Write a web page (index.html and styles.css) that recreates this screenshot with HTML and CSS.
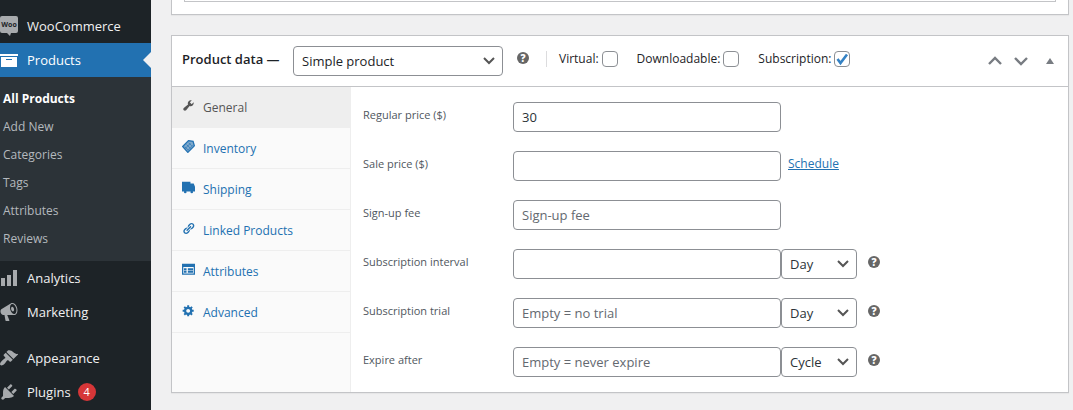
FILE: index.html
```html
<!DOCTYPE html>
<html lang="en">
<head>
<meta charset="utf-8">
<title>Edit product</title>
<link rel="stylesheet" href="styles.css">
</head>
<body>
<div class="layout">
  <nav class="sidebar" aria-label="Main menu">
    <a class="menu-item" href="#"><svg class="menu-icon" viewBox="1 0 18 20" aria-hidden="true"><path d="M2 0h15q2 0 2 2v13q0 2-2 2h-5l-1 3-3-3H3q-2 0-2-2V2q0-2 2-2z"/><text class="woo-text" x="10" y="11" text-anchor="middle">Woo</text></svg>WooCommerce</a>
    <a class="menu-item current" href="#"><svg class="menu-icon" viewBox="1 0 18 20" aria-hidden="true"><path d="M19 4v2H1V4h18zM2 7h16v10H2V7zm11 3V9H7v1h6z"/></svg>Products</a>
    <div class="submenu">
      <a class="submenu-item active" href="#">All Products</a>
      <a class="submenu-item" href="#">Add New</a>
      <a class="submenu-item" href="#">Categories</a>
      <a class="submenu-item" href="#">Tags</a>
      <a class="submenu-item" href="#">Attributes</a>
      <a class="submenu-item" href="#">Reviews</a>
    </div>
    <a class="menu-item" href="#"><svg class="menu-icon" viewBox="1 0 18 20" aria-hidden="true"><path d="M18 18V2h-4v16h4zm-6 0V7H8v11h4zm-6 0v-8H2v8h4z"/></svg>Analytics</a>
    <a class="menu-item" href="#"><svg class="menu-icon" viewBox="1 0 18 20" aria-hidden="true"><path d="M18.15 5.94c.46 1.62.38 3.22-.02 4.48-.42 1.28-1.26 2.18-2.3 2.48-.16.06-.26.06-.4.06-.06.02-.12.02-.18.02-.06.02-.14.02-.22.02h-6.8l2.22 5.5c.02.14-.06.26-.14.34-.08.1-.24.16-.34.16H6.95c-.1 0-.26-.06-.34-.16-.08-.08-.16-.2-.14-.34l-1-5.5H4.25l-.02-.02c-.5.06-1.08-.18-1.54-.62s-.88-1.08-1.06-1.88c-.24-.8-.2-1.56-.02-2.2.18-.62.58-1.08 1.06-1.3l.02-.02 9-5.4c.1-.06.18-.1.24-.16.06-.04.14-.08.24-.12.16-.08.28-.12.5-.18 1.04-.3 2.24.1 3.22.98s1.84 2.24 2.26 3.86zm-2.58 5.98h-.02c.4-.1.74-.34 1.04-.7.58-.7.86-1.76.86-3.04 0-.64-.1-1.3-.28-1.98-.34-1.36-1.02-2.5-1.78-3.24s-1.68-1.1-2.46-.88c-.82.22-1.4.96-1.7 2-.32 1.04-.28 2.36.06 3.72.38 1.36 1 2.5 1.8 3.24.78.74 1.62 1.1 2.48.88zm-2.54-7.08c.22-.04.42-.02.62.04.38.16.76.48 1.02 1s.42 1.2.42 1.78c0 .3-.04.56-.12.8-.18.48-.44.84-.86.94-.34.1-.8-.06-1.14-.4s-.64-.86-.78-1.5c-.18-.62-.12-1.24.02-1.72s.48-.84.82-.94z"/></svg>Marketing</a>
    <a class="menu-item spaced" href="#"><svg class="menu-icon" viewBox="1 0 18 20" aria-hidden="true"><path d="M14.48 11.06L7.41 3.99l1.5-1.5c.5-.56 2.3-.47 3.51.32 1.21.8 1.43 1.28 2.91 2.1 1.18.64 2.45 1.26 4.45.85zm-.71.71L6.7 4.7 4.93 6.47c-.39.39-.39 1.02 0 1.41l1.06 1.06c.39.39.39 1.03 0 1.42-.6.6-1.43 1.11-2.21 1.69-.35.26-.7.53-1.01.84C1.43 14.23.4 16.08 1.4 17.07c.99 1 2.84-.03 4.18-1.36.31-.31.58-.66.85-1.02.57-.78 1.08-1.61 1.69-2.21.39-.39 1.02-.39 1.41 0l1.06 1.06c.39.39 1.02.39 1.41 0z"/></svg>Appearance</a>
    <a class="menu-item" href="#"><svg class="menu-icon" viewBox="1 0 18 20" aria-hidden="true"><path d="M13.11 4.36L9.87 7.6 8 5.73l3.24-3.24c.35-.34 1.05-.2 1.56.32.52.51.66 1.21.31 1.55zm-8 1.77l.91-1.12 9.01 9.01-1.19.84c-.71.71-2.63 1.16-3.82 1.16H6.14L4.9 17.26c-.59.59-1.54.59-2.12 0-.59-.58-.59-1.53 0-2.12l1.24-1.24v-3.88c0-1.13.4-3.19 1.09-3.89zm7.26 3.97l3.24-3.24c.34-.35 1.04-.21 1.55.31.52.51.66 1.21.31 1.55l-3.24 3.25z"/></svg>Plugins<span class="count">4</span></a>
  </nav>

  <main class="main">
    <section class="postbox editor"><div class="editor-frame"></div></section>

    <section class="postbox">
      <header class="box-header">
        <label class="box-title" for="type">Product data —</label>
        <select class="field type-select" id="type"><option>Simple product</option></select>
        <span class="help">?</span>
        <div class="options">
          <label class="option">Virtual:<input class="check" type="checkbox"></label>
          <label class="option">Downloadable:<input class="check" type="checkbox"></label>
          <label class="option">Subscription:<input class="check" type="checkbox" checked></label>
        </div>
        <div class="handles">
          <button class="handle" type="button" aria-label="Move up"><svg width="14" height="10" viewBox="0 0 14 10"><path class="chevron" d="M1 8l6-6 6 6"/></svg></button>
          <button class="handle" type="button" aria-label="Move down"><svg width="14" height="10" viewBox="0 0 14 10"><path class="chevron" d="M1 2l6 6 6-6"/></svg></button>
          <button class="handle toggle" type="button" aria-label="Toggle panel"><svg width="8" height="6" viewBox="0 0 8 6"><path d="M4 0l4 6H0z"/></svg></button>
        </div>
      </header>

      <div class="box-body">
        <nav class="tabs" aria-label="Product data">
          <a class="tab selected" href="#"><svg class="tab-icon" viewBox="0 0 20 20" aria-hidden="true"><path d="M16.68 9.77c-1.34 1.34-3.3 1.67-4.95.99l-5.41 6.52c-.99.99-2.59.99-3.58 0s-.99-2.59 0-3.57l6.52-5.42c-.68-1.65-.35-3.61.99-4.95 1.28-1.28 3.12-1.62 4.72-1.06l-2.89 2.89 2.82 2.82 2.86-2.87c.53 1.58.18 3.39-1.08 4.65z"/></svg>General</a>
          <a class="tab" href="#"><svg class="tab-icon" viewBox="0 0 20 20" aria-hidden="true"><path class="tag-body" d="M10 1l7 1 2 7-10 10-8-9z"/><path class="tag-lines" d="M4 10l6 6M7 7l6 6M10 4l5 5M5 13l8-8M9 16l8-8"/></svg>Inventory</a>
          <a class="tab" href="#"><svg class="tab-icon" viewBox="0 0 20 20" aria-hidden="true"><path d="M0 1h13v3h5l2 5v7H0z"/><circle cx="5" cy="17" r="2"/><circle cx="15" cy="17" r="2"/></svg>Shipping</a>
          <a class="tab" href="#"><svg class="tab-icon" viewBox="0 0 20 20" aria-hidden="true"><path d="M17.74 2.76c1.68 1.69 1.68 4.41 0 6.1l-1.53 1.52c-1.12 1.12-2.7 1.47-4.14 1.09l2.62-2.61.76-.77.76-.76c.84-.84.84-2.2 0-3.04-.84-.85-2.2-.85-3.04 0l-.77.76-3.38 3.38c-.37-1.44-.02-3.02 1.1-4.14l1.52-1.53c1.69-1.68 4.42-1.68 6.1 0zM8.59 13.43l5.34-5.34c.42-.42.42-1.1 0-1.52-.44-.43-1.13-.39-1.53 0l-5.33 5.34c-.42.42-.42 1.1 0 1.52.44.43 1.13.39 1.52 0zm-.76 2.29l4.14-4.15c.38 1.44.03 3.02-1.09 4.14l-1.52 1.53c-1.69 1.68-4.41 1.68-6.1 0-1.68-1.68-1.68-4.42 0-6.1l1.53-1.52c1.12-1.12 2.7-1.47 4.14-1.1l-4.14 4.15c-.85.84-.85 2.2 0 3.05.84.84 2.2.84 3.04 0z"/></svg>Linked Products</a>
          <a class="tab" href="#"><svg class="tab-icon" viewBox="0 0 20 20" aria-hidden="true"><path fill-rule="evenodd" d="M0 1h20v17H0zM2 6v10h16V6zM3 8h4v3H3zM3 12h4v3H3zM9 8h8v3H9zM9 12h8v3H9z"/></svg>Attributes</a>
          <a class="tab" href="#"><svg class="tab-icon" viewBox="0 0 20 20" aria-hidden="true"><path d="M18 12h-2.18c-.17.7-.44 1.35-.81 1.93l1.54 1.54-2.1 2.1-1.54-1.54c-.58.36-1.23.63-1.91.79V19H8v-2.18c-.68-.16-1.33-.43-1.91-.79l-1.54 1.54-2.12-2.12 1.54-1.54c-.36-.58-.63-1.23-.79-1.91H1V9.03h2.17c.16-.7.44-1.35.8-1.94L2.43 5.55l2.1-2.1 1.54 1.54c.58-.37 1.24-.64 1.93-.81V2h3v2.18c.68.16 1.33.43 1.91.79l1.54-1.54 2.12 2.12-1.54 1.54c.36.59.64 1.24.8 1.94H18V12zm-8.5 1.5c1.66 0 3-1.34 3-3s-1.34-3-3-3-3 1.34-3 3 1.34 3 3 3z"/></svg>Advanced</a>
        </nav>

        <form class="fields">
          <div class="row"><label class="row-label" for="regular">Regular price ($)</label><input class="field text" id="regular" type="text" value="30"></div>
          <div class="row"><label class="row-label" for="sale">Sale price ($)</label><input class="field text" id="sale" type="text"><a class="schedule" href="#">Schedule</a></div>
          <div class="row"><label class="row-label" for="fee">Sign-up fee</label><input class="field text" id="fee" type="text" placeholder="Sign-up fee"></div>
          <div class="row"><label class="row-label" for="interval">Subscription interval</label><input class="field text" id="interval" type="text"><select class="field unit" aria-label="Interval unit"><option>Day</option></select><span class="help">?</span></div>
          <div class="row"><label class="row-label" for="trial">Subscription trial</label><input class="field text" id="trial" type="text" placeholder="Empty = no trial"><select class="field unit" aria-label="Trial unit"><option>Day</option></select><span class="help">?</span></div>
          <div class="row"><label class="row-label" for="expire">Expire after</label><input class="field text" id="expire" type="text" placeholder="Empty = never expire"><select class="field unit" aria-label="Expiry unit"><option>Cycle</option></select><span class="help">?</span></div>
        </form>
      </div>
    </section>
  </main>
</div>
</body>
</html>
```
FILE: styles.css
```css
* { box-sizing: border-box; }

body {
  margin: 0;
  background: #f0f0f1;
  color: #1d2327;
  font: 13px/18px "Open Sans", "Noto Sans", sans-serif;
}

.layout { display: flex; min-height: 100vh; }

/* Sidebar */
.sidebar { flex: 0 0 151px; padding-top: 9px; background: #1d2327; }

.menu-item {
  position: relative;
  display: flex;
  align-items: center;
  gap: 9px;
  height: 34px;
  color: #f0f0f1;
  font-size: 13px;
  text-decoration: none;
}
.menu-item.spaced { margin-top: 12px; }
.menu-item.current { background: #2271b1; color: #fff; }
.menu-item.current::after {
  content: "";
  position: absolute;
  right: 0;
  border: 8px solid transparent;
  border-right-color: #f0f0f1;
  border-left-width: 0;
}
.menu-icon { width: 18px; height: 20px; fill: #a7aaad; }
.current .menu-icon { fill: #fff; }
.woo-text { fill: #1d2327; font-size: 7px; font-weight: 700; }
.count {
  width: 18px;
  border-radius: 9px;
  background: #d63638;
  color: #fff;
  font-size: 11px;
  text-align: center;
  margin-left: -2px;
}

.submenu { padding: 8px 0; background: #2c3338; }
.submenu-item {
  display: block;
  padding: 5px 3px;
  color: #b4b9be;
  font-size: 12px;
  text-decoration: none;
}
.submenu-item.active { color: #fff; font-weight: 700; }

/* Main column */
.main { flex: 1; min-width: 0; padding: 0 4px 0 20px; }
.postbox {
  border: 1px solid #c3c4c7;
  background: #fff;
  box-shadow: 0 1px 1px rgba(0, 0, 0, .04);
}
.editor { margin-bottom: 20px; padding: 0 12px 12px; border-top: 0; }
.editor-frame { height: 2px; border: 1px solid #c3c4c7; border-top: 0; }

.box-header {
  display: flex;
  align-items: center;
  min-height: 51px;
  padding: 0 14px 0 10px;
  border-bottom: 1px solid #c3c4c7;
}
.box-title { flex: 0 0 111px; padding-bottom: 4px; font-size: 13px; font-weight: 600; }

.field {
  height: 30px;
  padding: 0 8px;
  border: 1px solid #8c8f94;
  border-radius: 4px;
  background-color: #fff;
  color: #2c3338;
  font: 13px/28px "Open Sans", "Noto Sans", sans-serif;
}
.field::placeholder { color: #646970; opacity: 1; }
select.field {
  appearance: none;
  background-image: url("data:image/svg+xml,%3Csvg xmlns='http://www.w3.org/2000/svg' viewBox='0 0 12 8'%3E%3Cpath d='M1 1l5 5 5-5' fill='none' stroke='%23555' stroke-width='2'/%3E%3C/svg%3E");
  background-repeat: no-repeat;
  background-position: right 7px center;
  background-size: 12px 8px;
}
select.type-select { width: 210px; color: #1d2327; font-weight: 500; }

.help {
  flex: none;
  width: 12px;
  height: 12px;
  margin: 0 0 4px 11px;
  border-radius: 50%;
  background: #666;
  color: #fff;
  font-size: 10px;
  font-weight: 800;
  line-height: 12px;
  text-align: center;
}
.box-header .help { margin: 0 0 7px 14px; }

.options {
  display: flex;
  gap: 19px;
  margin: 0 0 4px 17px;
  padding-left: 12px;
  border-left: 1px solid #dcdcde;
}
.option { display: flex; align-items: center; gap: 3px; height: 16px; font-size: 12px; }
.check {
  appearance: none;
  width: 16px;
  height: 16px;
  margin: 0;
  border: 1px solid #8c8f94;
  border-radius: 4px;
  background: #fff;
}
.check:checked {
  background: #fff url("data:image/svg+xml,%3Csvg xmlns='http://www.w3.org/2000/svg' viewBox='0 0 14 14'%3E%3Cpath d='M2.5 7l3 4 6.5-8.500' fill='none' stroke='%233582c4' stroke-width='2.6'/%3E%3C/svg%3E") center / 14px 14px;
}

.handles { display: flex; align-items: center; gap: 12px; margin-left: auto; }
.handle { display: flex; padding: 0; border: 0; background: none; fill: #787c82; }
.handle.toggle { margin-left: 6px; }
.chevron { fill: none; stroke: #787c82; stroke-width: 2.4; }

/* Product data body */
.box-body { display: flex; }
.tabs { flex: 0 0 179px; border-right: 1px solid #eee; background: #fafafa; }
.tab {
  display: flex;
  align-items: center;
  gap: 8px;
  height: 41px;
  padding: 1px 10px 0;
  border-bottom: 1px solid #eee;
  color: #2271b1;
  font-size: 12px;
  text-decoration: none;
}
.tab.selected { background: #eee; color: #555; }
.tab-icon { width: 13px; height: 13px; margin-bottom: 4px; fill: currentColor; }
.tag-body { fill: #7fa9cc; stroke: #2271b1; stroke-width: 2; }
.tag-lines { fill: none; stroke: #2271b1; stroke-width: 1; }

.fields { flex: 1; min-width: 0; display: grid; align-content: start; gap: 19px; padding: 15px 12px; }
.row { display: flex; align-items: center; }
.row-label { flex: 0 0 150px; padding-bottom: 4px; color: #50575e; font-size: 11px; }
.text { width: 268px; }
.unit { width: 76px; }
.schedule { margin-left: 7px; padding-bottom: 4px; color: #2271b1; font-size: 12px; }
```
